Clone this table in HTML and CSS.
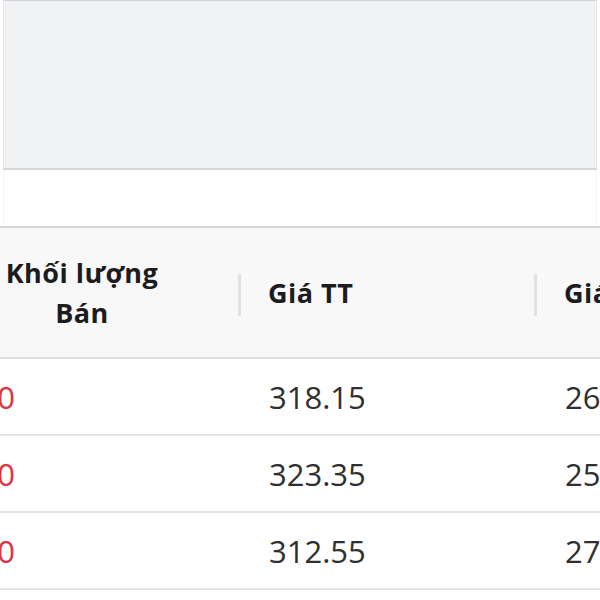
FILE: index.html
```html
<!DOCTYPE html>
<html lang="vi">
<head>
<meta charset="utf-8">
<title>Bảng giá</title>
<link rel="stylesheet" href="styles.css">
</head>
<body>
<div class="page">
  <div class="panel"></div>
  <div class="spacer"></div>
  <div class="table-wrap">
    <table class="grid">
      <colgroup>
        <col class="c1"><col class="c2"><col class="c3">
      </colgroup>
      <thead>
        <tr>
          <th class="center">Khối lượng<br>Bán</th>
          <th>Giá TT</th>
          <th>Giá trần</th>
        </tr>
      </thead>
      <tbody>
        <tr><td class="red">1,000</td><td>318.15</td><td>268.40</td></tr>
        <tr><td class="red">2,000</td><td>323.35</td><td>257.90</td></tr>
        <tr><td class="red">1,000</td><td>312.55</td><td>273.10</td></tr>
      </tbody>
    </table>
  </div>
</div>
</body>
</html>
```

FILE: styles.css
```css
html, body {
  margin: 0;
  padding: 0;
  background: #ffffff;
}

.page {
  width: 600px;
  height: 600px;
  overflow: hidden;
  font-family: "Open Sans", "Noto Sans", sans-serif;
}

.panel {
  height: 167px;
  margin: 0 3px;
  background: #f1f2f4;
  border: 1px solid #e3e5e9;
  border-top-color: #d2d4d8;
  border-bottom: 2px solid #d3d5d9;
}

.spacer {
  height: 56px;
  margin: 0 3px;
  border-left: 1px solid #f3f4f6;
  border-right: 1px solid #f3f4f6;
}

.table-wrap {
  overflow: hidden;
  width: 600px;
}

.grid {
  margin-left: -76px;
  width: 700px;
  table-layout: fixed;
  border-collapse: separate;
  border-spacing: 0;
}

.c1 { width: 316px; }
.c2 { width: 296px; }
.c3 { width: 88px; }

.grid th {
  position: relative;
  height: 129px;
  padding: 0 0 0 28px;
  background: #f8f8f8;
  border-top: 2px solid #d6d6d6;
  border-bottom: 2px solid #dfdfdf;
  color: #1c1c1e;
  font-size: 27px;
  font-weight: 700;
  letter-spacing: 0.5px;
  line-height: 40px;
  text-align: left;
  vertical-align: middle;
  white-space: nowrap;
}

.grid th.center {
  text-align: center;
  padding: 0;
}

.grid th + th::before {
  content: "";
  position: absolute;
  left: -2px;
  top: 50%;
  width: 3px;
  height: 42px;
  margin-top: -19px;
  background: #e2e2e2;
}

.grid td {
  height: 75px;
  padding: 0 0 0 29px;
  border-bottom: 2px solid #e4e4e4;
  color: #303030;
  font-size: 31px;
  line-height: 40px;
  vertical-align: middle;
  white-space: nowrap;
}

.grid td.red {
  color: #dc3545;
  padding-left: 12px;
}
```
